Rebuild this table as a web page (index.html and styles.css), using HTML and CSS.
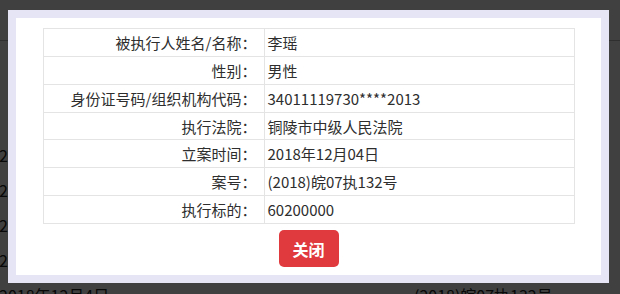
FILE: index.html
```html
<!DOCTYPE html>
<html lang="zh">
<head>
<meta charset="utf-8">
<link rel="stylesheet" href="styles.css">
</head>
<body>
<div class="page">
  <div class="page-head"></div>
  <div class="page-gap"></div>
  <div class="page-row"><span class="c1">2018年12月4日</span><span class="c2">(2018)皖07执132号</span></div>
  <div class="page-row"><span class="c1">2018年12月4日</span><span class="c2">(2018)皖07执132号</span></div>
  <div class="page-row"><span class="c1">2018年12月4日</span><span class="c2">(2018)皖07执132号</span></div>
  <div class="page-row"><span class="c1">2018年12月4日</span><span class="c2">(2018)皖07执132号</span></div>
  <div class="page-row"><span class="c1">2018年12月4日</span><span class="c2">(2018)皖07执132号</span></div>
</div>
<div class="mask"></div>
<div class="modal">
  <div class="info">
    <div class="lbl">被执行人姓名/名称：</div><div class="val">李瑶</div>
    <div class="lbl">性别：</div><div class="val">男性</div>
    <div class="lbl">身份证号码/组织机构代码：</div><div class="val">34011119730****2013</div>
    <div class="lbl">执行法院：</div><div class="val">铜陵市中级人民法院</div>
    <div class="lbl">立案时间：</div><div class="val">2018年12月04日</div>
    <div class="lbl">案号：</div><div class="val">(2018)皖07执132号</div>
    <div class="lbl">执行标的：</div><div class="val">60200000</div>
  </div>
  <div class="actions"><button class="btn-close">关闭</button></div>
</div>
</body>
</html>
```
FILE: styles.css
```css
html, body {
  margin: 0;
  padding: 0;
}
body {
  width: 620px;
  height: 294px;
  overflow: hidden;
  position: relative;
  background: #fff;
  font-family: "Noto Sans CJK SC", "Noto Sans", sans-serif;
  color: #333;
}
.page {
  display: flex;
  flex-direction: column;
}
.page-head {
  height: 40px;
  border-bottom: 1px solid #bbb;
}
.page-gap {
  height: 96px;
}
.page-row {
  height: 35px;
  display: flex;
  align-items: center;
  font-size: 16px;
  color: #222;
}
.page-row .c1 {
  width: 415px;
  margin-left: -1px;
}
.mask {
  position: absolute;
  inset: 0;
  background: rgba(0, 0, 0, 0.75);
}
.modal {
  position: absolute;
  left: 8px;
  top: 10px;
  width: 585px;
  height: 247px;
  border: 8px solid #e6e5f5;
  background: #fff;
  padding-top: 10px;
}
.info {
  margin: 0 auto;
  width: 530px;
  display: grid;
  grid-template-columns: 221px 1fr;
  grid-auto-rows: 27.86px;
  border: 1px solid #e4e4e4;
  border-top: none;
  font-size: 15px;
  color: #2e2e2e;
}
.info > div {
  border-top: 1px solid #e4e4e4;
  display: flex;
  align-items: center;
  white-space: nowrap;
}
.info .lbl {
  justify-content: flex-end;
  padding-right: 7px;
  border-right: 1px solid #e4e4e4;
}
.info .val {
  padding-left: 3px;
}
.actions {
  display: flex;
  justify-content: center;
  margin-top: 6px;
}
.btn-close {
  width: 60px;
  height: 37px;
  border: none;
  border-radius: 5px;
  background: #e0393e;
  color: #fff;
  font-family: "Noto Sans CJK SC", sans-serif;
  font-size: 16px;
  font-weight: bold;
  padding: 0;
}
```
